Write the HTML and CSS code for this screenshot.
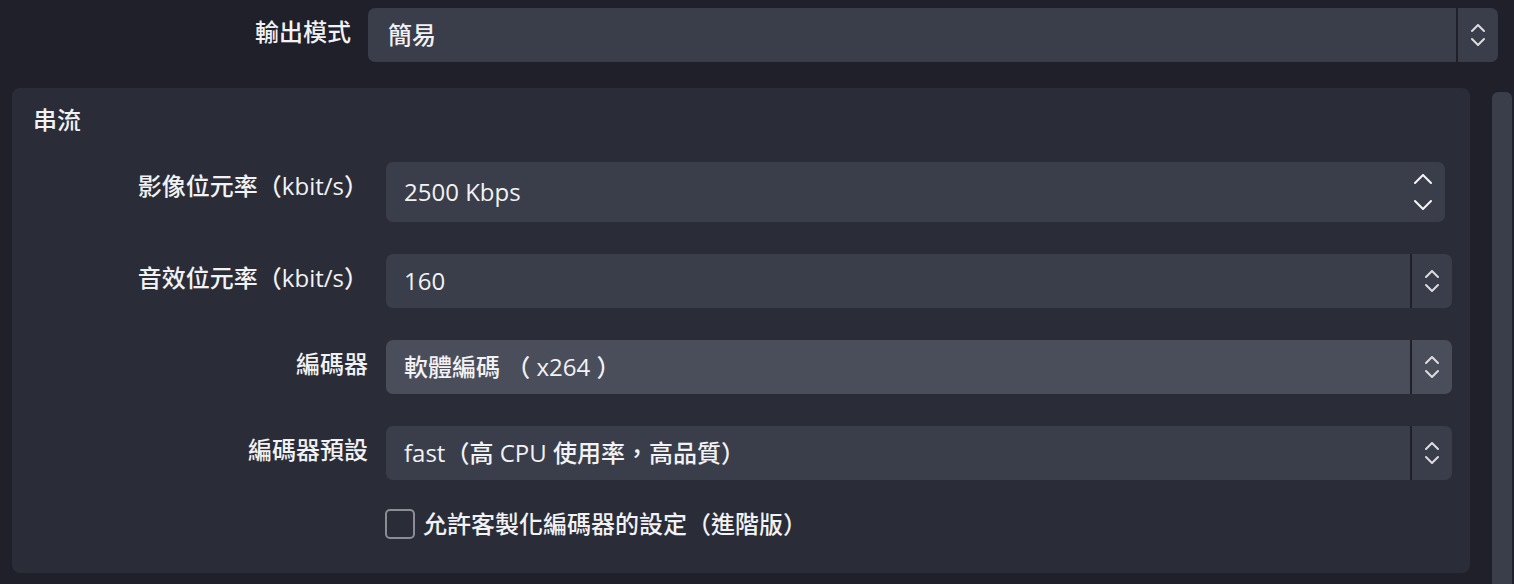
FILE: index.html
```html
<!DOCTYPE html>
<html lang="zh-Hant">

<head>
    <meta charset="UTF-8">
    <meta name="viewport" content="width=device-width, initial-scale=1.0">
    <title>輸出設定</title>
    <link rel="stylesheet" href="styles.css">
</head>

<body>

    <div class="page">
        <!-- Output mode -->
        <div class="mode-row">
            <label class="mode-label">輸出模式</label>
            <div class="field combo">
                <span class="value">簡易</span>
                <span class="arrows divided">
                    <svg width="14" height="22" viewBox="0 0 14 22"><polyline points="1,7 7,1 13,7" /><polyline points="1,15 7,21 13,15" /></svg>
                </span>
            </div>
        </div>

        <div class="lower">
            <!-- Streaming group -->
            <div class="group">
                <div class="group-title">串流</div>

                <div class="form">
                    <label class="row-label">影像位元率（kbit/s）</label>
                    <div class="field spin tall">
                        <span class="value">2500 Kbps</span>
                        <span class="arrows plain">
                            <svg width="18" height="36" viewBox="0 0 18 36"><polyline points="1,9 9,1 17,9" /><polyline points="1,27 9,35 17,27" /></svg>
                        </span>
                    </div>

                    <label class="row-label">音效位元率（kbit/s）</label>
                    <div class="field combo">
                        <span class="value">160</span>
                        <span class="arrows divided">
                            <svg width="14" height="22" viewBox="0 0 14 22"><polyline points="1,7 7,1 13,7" /><polyline points="1,15 7,21 13,15" /></svg>
                        </span>
                    </div>

                    <label class="row-label">編碼器</label>
                    <div class="field combo hover">
                        <span class="value">軟體編碼 （ x264 ）</span>
                        <span class="arrows divided">
                            <svg width="14" height="22" viewBox="0 0 14 22"><polyline points="1,7 7,1 13,7" /><polyline points="1,15 7,21 13,15" /></svg>
                        </span>
                    </div>

                    <label class="row-label">編碼器預設</label>
                    <div class="field combo">
                        <span class="value">fast（高 CPU 使用率，高品質）</span>
                        <span class="arrows divided">
                            <svg width="14" height="22" viewBox="0 0 14 22"><polyline points="1,7 7,1 13,7" /><polyline points="1,15 7,21 13,15" /></svg>
                        </span>
                    </div>

                    <div></div>
                    <label class="check">
                        <span class="box"></span>
                        <span>允許客製化編碼器的設定（進階版）</span>
                    </label>
                </div>
            </div>

            <div class="scrollbar"></div>
        </div>
    </div>

</body>

</html>
```

FILE: styles.css
```css
* {
    margin: 0;
    padding: 0;
    box-sizing: border-box;
}

body {
    font-family: 'Open Sans', 'Noto Sans CJK TC', sans-serif;
    background-color: #1f2029;
    color: #f2f2f4;
    font-size: 24px;
    font-weight: 500;
    line-height: 32px;
    overflow: hidden;
}

.page {
    padding: 8px 0 0 12px;
}

/* Top output mode row */
.mode-row {
    display: flex;
    align-items: flex-start;
    gap: 17px;
    padding-right: 16px;
}

.mode-label {
    width: 339px;
    text-align: right;
    margin-top: 8px;
}

.mode-row .field {
    flex: 1;
}

/* Fields */
.field {
    display: flex;
    align-items: center;
    height: 54px;
    background-color: #3a3e4a;
    border-radius: 7px;
    overflow: hidden;
}

.field.hover {
    background-color: #4a4e5a;
}

.field.tall {
    height: 60px;
    margin-right: 7px;
}

.value {
    flex: 1;
    padding-left: 20px;
    white-space: nowrap;
}

.spin .value,
.form .combo .value {
    padding-left: 18px;
}

.arrows {
    display: flex;
    align-items: center;
    justify-content: center;
    height: 100%;
}

.arrows svg polyline {
    fill: none;
    stroke: #dcdce0;
    stroke-width: 2;
    stroke-linecap: round;
    stroke-linejoin: round;
}

.arrows.divided {
    width: 42px;
    border-left: 2px solid #1f2029;
}

.arrows.plain {
    width: 44px;
    justify-content: flex-end;
    padding-right: 13px;
}

.arrows.plain svg polyline {
    stroke: #f6f6f8;
}

/* Lower area: group + scrollbar */
.lower {
    display: flex;
    margin-top: 26px;
}

.group {
    width: 1458px;
    height: 485px;
    background-color: #2a2d38;
    border-radius: 8px;
    padding: 16px 18px 0 20px;
}

.group-title {
    margin-bottom: 26px;
    padding-left: 1px;
}

.form {
    display: grid;
    grid-template-columns: 336px 1fr;
    column-gap: 18px;
    row-gap: 32px;
    align-items: start;
}

.row-label {
    text-align: right;
    white-space: nowrap;
    margin-top: 8px;
}

/* Checkbox */
.check {
    display: flex;
    align-items: center;
    gap: 8px;
    height: 30px;
    margin-top: -3px;
    margin-left: -1px;
}

.box {
    width: 30px;
    height: 30px;
    border: 2px solid #8c8d94;
    border-radius: 5px;
}

.scrollbar {
    width: 20px;
    margin: 4px 0 0 22px;
    height: 500px;
    background-color: #3a3e4a;
    border-radius: 6px 6px 0 0;
}
```
